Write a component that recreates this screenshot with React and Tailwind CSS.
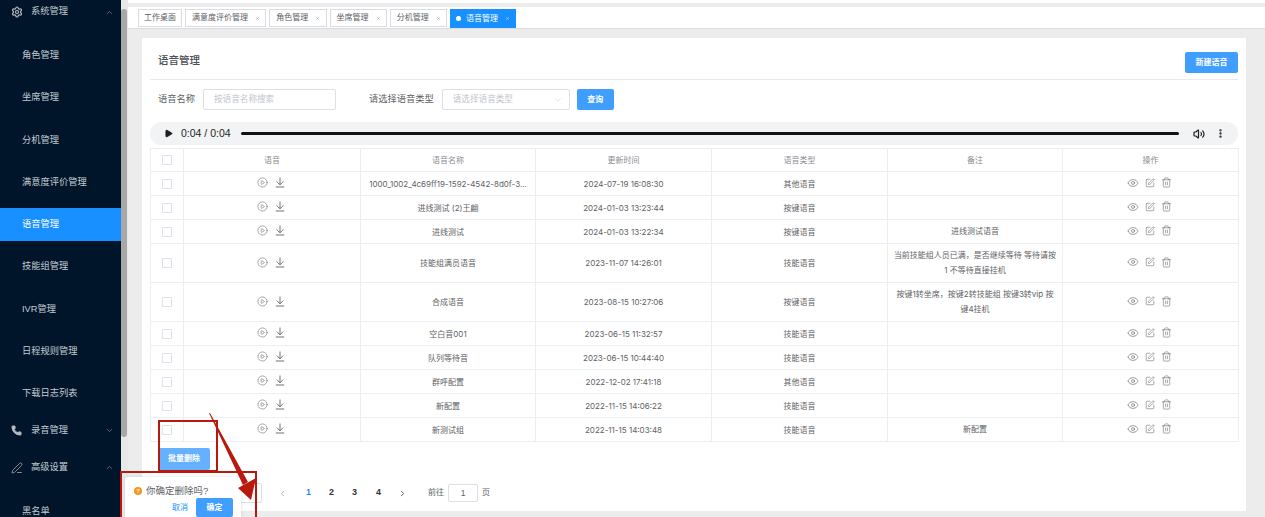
import React from 'react';
import {
  ChevronDown,
  ChevronUp,
  ChevronLeft,
  ChevronRight,
  CirclePlay,
  Eye,
  EllipsisVertical,
  PenLine,
  Phone,
  Play,
  Settings,
  SquarePen,
  Trash2,
  Volume2,
  X,
} from 'lucide-react';

const menuItems = ['角色管理', '坐席管理', '分机管理', '满意度评价管理', '语音管理', '技能组管理', 'IVR管理', '日程规则管理', '下载日志列表'];

const tabs = [
  { name: '工作桌面' },
  { name: '满意度评价管理', close: true },
  { name: '角色管理', close: true },
  { name: '坐席管理', close: true },
  { name: '分机管理', close: true },
];

const rows = [
  { name: '1000_1002_4c69ff19-1592-4542-8d0f-3...', time: '2024-07-19 16:08:30', type: '其他语音', note: '' },
  { name: '进线测试 (2)王翩', time: '2024-01-03 13:23:44', type: '按键语音', note: '' },
  { name: '进线测试', time: '2024-01-03 13:22:34', type: '按键语音', note: '进线测试语音' },
  { name: '技能组满员语音', time: '2023-11-07 14:26:01', type: '技能语音', note: '当前技能组人员已满，是否继续等待 等待请按\n1 不等待直接挂机', tall: true },
  { name: '合成语音', time: '2023-08-15 10:27:06', type: '按键语音', note: '按键1转坐席，按键2转技能组 按键3转vip 按\n键4挂机', tall: true },
  { name: '空白音001', time: '2023-06-15 11:32:57', type: '技能语音', note: '' },
  { name: '队列等待音', time: '2023-06-15 10:44:40', type: '技能语音', note: '' },
  { name: '群呼配置', time: '2022-12-02 17:41:18', type: '其他语音', note: '' },
  { name: '新配置', time: '2022-11-15 14:06:22', type: '技能语音', note: '' },
  { name: '新测试组', time: '2022-11-15 14:03:48', type: '技能语音', note: '新配置' },
];

// arrow over a short line, lucide's Download has a tray instead
const DownloadLine = () => (
  <svg width="10" height="11" viewBox="0 0 10 11" fill="none" stroke="currentColor" strokeWidth="0.9">
    <path d="M5 0.5V7.5M1.8 4.6L5 7.8L8.2 4.6M0.8 10H9.2" />
  </svg>
);

const Sidebar = () => (
  <aside className="w-[121px] h-full shrink-0 bg-[#001529] text-[#c3cbd3] text-[9.25px] overflow-hidden">
    <div className="h-[36px] -mt-[6px] flex items-center pl-[11px] pr-[7px]">
      <Settings size={12} strokeWidth={2.4} className="text-[#b5bdc5]" />
      <span className="ml-[8px] flex-1">系统管理</span>
      <ChevronUp size={9} className="text-[#6f7d8a]" />
    </div>
    <div className="pt-[9px]">
      {menuItems.map((item) => (
        <div
          key={item}
          className={`h-[33px] mb-[9.25px] pt-[1px] flex items-center pl-[22px] ${item === '语音管理' ? 'bg-[#1890ff] text-white' : ''}`}
        >
          {item}
        </div>
      ))}
    </div>
    <div className="h-[37px] -mt-[7px] flex items-center pl-[11px] pr-[7px]">
      <Phone size={11} fill="currentColor" className="text-[#b5bdc5]" />
      <span className="ml-[9px] flex-1">录音管理</span>
      <ChevronDown size={9} className="text-[#6f7d8a]" />
    </div>
    <div className="h-[37px] flex items-center pl-[11px] pr-[7px]">
      <PenLine size={12} strokeWidth={1.4} className="text-[#b5bdc5]" />
      <span className="ml-[8px] flex-1">高级设置</span>
      <ChevronUp size={9} className="text-[#6f7d8a]" />
    </div>
    <div className="h-[33px] mt-[9px] flex items-center pl-[22px]">黑名单</div>
  </aside>
);

const TabBar = () => (
  <div className="h-[22px] mt-[4px] bg-white border-b border-[#dcdcdc] flex items-start pl-[10px] pt-[2px] gap-[3px] text-[8px] text-[#5a5e66]">
    {tabs.map((tab) => (
      <div key={tab.name} className={`h-[18px] border border-[#d8dce5] bg-white flex items-center ${tab.close ? 'pl-[6px] pr-[5.25px]' : 'px-[5px] w-[44px]'}`}>
        {tab.name}
        {tab.close && <X size={5} className="ml-[7px] text-[#8a8f99]" />}
      </div>
    ))}
    <div className="h-[19px] pl-[6px] pr-[6px] bg-[#1890ff] text-white flex items-center">
      <span className="w-[5px] h-[5px] rounded-full bg-white mr-[5px]" />
      语音管理
      <X size={5} className="ml-[7px] text-[#d5e9ff]" />
    </div>
  </div>
);

const AudioBar = () => (
  <div className="h-[23px] rounded-full bg-[#f1f3f4] flex items-center pl-[14px] pr-[12px] text-[10.5px] text-[#1f1f1f]">
    <Play size={9} fill="currentColor" />
    <span className="ml-[8px]">0:04 / 0:04</span>
    <div className="ml-[10px] flex-1 h-[3px] rounded-full bg-[#111111]" />
    <Volume2 size={12} strokeWidth={2.4} className="ml-[14px]" />
    <EllipsisVertical size={11} strokeWidth={3} className="ml-[10px]" />
  </div>
);

const Check = () => <span className="block w-[10px] h-[10px] mx-auto border border-[#dcdfe6] rounded-[1px] bg-white" />;

const VoiceTable = () => (
  <table className="w-[1088px] mt-[3px] table-fixed border-collapse border border-[#ebeef5] text-[8px] text-[#606266] font-['Inter','Noto_Sans_CJK_SC',sans-serif]">
    <colgroup>
      <col className="w-[33px]" />
      <col className="w-[177px]" />
      <col className="w-[175px]" />
      <col className="w-[176px]" />
      <col className="w-[176px]" />
      <col className="w-[175px]" />
      <col className="w-[176px]" />
    </colgroup>
    <thead>
      <tr className="h-[23px] text-[#8a8d94]">
        <th className="border border-[#ebeef5] font-normal"><Check /></th>
        <th className="border border-[#ebeef5] font-normal">语音</th>
        <th className="border border-[#ebeef5] font-normal">语音名称</th>
        <th className="border border-[#ebeef5] font-normal">更新时间</th>
        <th className="border border-[#ebeef5] font-normal">语音类型</th>
        <th className="border border-[#ebeef5] font-normal">备注</th>
        <th className="border border-[#ebeef5] font-normal">操作</th>
      </tr>
    </thead>
    <tbody>
      {rows.map((row) => (
        <tr key={row.time} className={row.tall ? 'h-[39px]' : 'h-[24px]'}>
          <td className="border border-[#ebeef5]"><Check /></td>
          <td className="border border-[#ebeef5]">
            <div className="flex justify-center items-center gap-[7px] -translate-y-[1px] pr-[2px] text-[#606266]">
              <CirclePlay size={11} strokeWidth={1.2} />
              <DownloadLine />
            </div>
          </td>
          <td className="border border-[#ebeef5] text-center">{row.name}</td>
          <td className="border border-[#ebeef5] text-center">{row.time}</td>
          <td className="border border-[#ebeef5] text-center">{row.type}</td>
          <td className="border border-[#ebeef5] text-center leading-[15px] whitespace-pre-line">{row.note}</td>
          <td className="border border-[#ebeef5]">
            <div className="flex justify-center items-center gap-[6px] -translate-y-[1px] pr-[2px] text-[#606266]">
              <Eye size={12} strokeWidth={1.2} />
              <SquarePen size={10} strokeWidth={1.3} />
              <Trash2 size={11} strokeWidth={1.2} />
            </div>
          </td>
        </tr>
      ))}
    </tbody>
  </table>
);

const Pagination = () => (
  <div className="h-[20px] mt-[13px] flex items-center text-[9px] font-bold text-[#303133]">
    <div className="ml-[90px] w-[22px] h-[20px] border border-[#dcdfe6] rounded-[2px] flex items-center justify-end pr-[3px]">
      <ChevronDown size={8} strokeWidth={1.2} className="text-[#c0c4cc]" />
    </div>
    <ChevronLeft size={9} className="ml-[16px] text-[#9aa0a8]" />
    <span className="ml-[19px] text-[#1890ff]">1</span>
    <span className="ml-[18px]">2</span>
    <span className="ml-[18px]">3</span>
    <span className="ml-[19px]">4</span>
    <ChevronRight size={9} className="ml-[17px]" />
    <span className="ml-[21px] font-normal text-[8px] text-[#606266]">前往</span>
    <div className="ml-[4px] w-[30px] h-[18px] border border-[#dcdfe6] rounded-[2px] flex items-center justify-center font-normal text-[8.5px] text-[#606266]">1</div>
    <span className="ml-[4px] font-normal text-[8px] text-[#606266]">页</span>
  </div>
);

const Annotations = () => (
  <>
    <div className="absolute left-[120px] top-[471px] w-[137px] h-[46px] border-[2px] border-b-0 border-[#b8190c]" />
    <div className="absolute left-[125px] top-[477px] w-[116px] h-[40px] bg-white rounded-t-[3px] pl-[9px] pr-[8px] pt-[7px] shadow-[0_0_4px_rgba(0,0,0,0.12)]">
      <div className="flex items-center text-[9.5px] text-[#606266]">
        <span className="w-[8px] h-[8px] rounded-full bg-[#f7941d] text-white text-[6px] leading-[8px] text-center font-bold">?</span>
        <span className="ml-[4px]">你确定删除吗?</span>
      </div>
      <div className="flex items-center justify-end text-[8px]">
        <span className="text-[#1890ff] mr-[8px] mt-[1px]">取消</span>
        <span className="w-[37px] h-[19px] rounded-[2px] bg-[#409eff] text-white font-bold flex items-center justify-center">确定</span>
      </div>
    </div>
    <div className="absolute left-[158px] top-[420px] w-[60px] h-[52px] border-[2px] border-[#b8190c]" />
    <svg className="absolute left-0 top-0 pointer-events-none" width="1265" height="517" viewBox="0 0 1265 517">
      <polygon points="209,413 210,413 248,482 243,485" fill="#b8190c" />
      <polygon points="238,488 256,478 251,500" fill="#b8190c" />
    </svg>
  </>
);

const App = () => (
  <div className="relative w-[1265px] h-[517px] overflow-hidden flex bg-[#ececec] font-['Liberation_Sans','Noto_Sans_CJK_SC',sans-serif]">
    <Sidebar />
    <div className="w-[7px] h-full bg-[#e8e8e8] relative">
      <div className="absolute left-0 top-[9px] w-[6px] h-[428px] bg-[#a8a8a8] rounded-[3px]" />
    </div>
    <div className="flex-1 min-w-0">
      <div className="h-[3px] bg-white" />
      <TabBar />
      <main className="ml-[14px] w-[1104px] h-[473px] mt-[9px] bg-white px-[8px] pt-[14px]">
        <div className="h-[28px] border-b border-[#e6ebf0] flex justify-between items-start">
          <h1 className="ml-[8px] text-[10.5px] leading-[16px] font-medium text-[#4a4d52]">语音管理</h1>
          <button className="w-[53px] h-[21px] bg-[#409eff] text-white text-[8px] font-bold rounded-[2px]">新建语音</button>
        </div>
        <div className="h-[21px] mt-[9px] flex items-center text-[9.25px] text-[#606266]">
          <span className="ml-[8px]">语音名称</span>
          <div className="ml-[8px] w-[133px] h-[21px] border border-[#dcdfe6] rounded-[2px] flex items-center pl-[10px] text-[8.6px] text-[#c0c4cc]">按语音名称搜索</div>
          <span className="ml-[33px]">请选择语音类型</span>
          <div className="ml-[8px] w-[128px] h-[21px] border border-[#dcdfe6] rounded-[2px] flex items-center justify-between pl-[10px] pr-[6px] text-[8.6px] text-[#c0c4cc]">
            请选择语音类型
            <ChevronDown size={10} strokeWidth={1.2} />
          </div>
          <button className="ml-[7px] w-[37px] h-[21px] bg-[#409eff] text-white text-[8px] font-bold rounded-[2px]">查询</button>
        </div>
        <div className="mt-[12px]"><AudioBar /></div>
        <VoiceTable />
        <button className="ml-[8px] mt-[6px] w-[52px] h-[22px] bg-[#66b1ff] text-white text-[8px] font-bold rounded-[2px] block">批量删除</button>
        <Pagination />
      </main>
    </div>
    <Annotations />
  </div>
);

export default App;
